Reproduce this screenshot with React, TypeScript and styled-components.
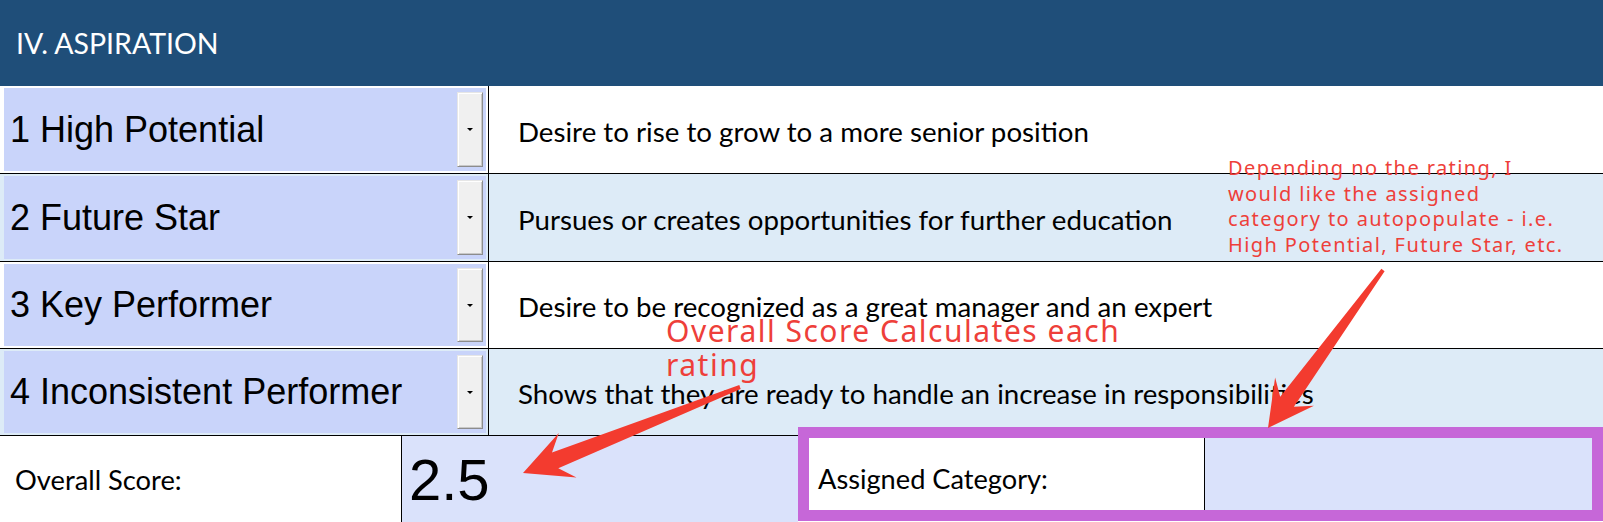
import styled, { createGlobalStyle } from 'styled-components'

const GlobalStyle = createGlobalStyle`
  html, body {
    margin: 0;
    padding: 0;
    background: #ffffff;
  }
`

interface Rating {
  label: string
  desc: string
  height: number
  shaded: boolean
}

const ratings: Rating[] = [
  { label: '1 High Potential', desc: 'Desire to rise to grow to a more senior position', height: 88, shaded: false },
  { label: '2 Future Star', desc: 'Pursues or creates opportunities for further education', height: 88, shaded: true },
  { label: '3 Key Performer', desc: 'Desire to be recognized as a great manager and an expert', height: 87, shaded: false },
  { label: '4 Inconsistent Performer', desc: 'Shows that they are ready to handle an increase in responsibilities', height: 87, shaded: true },
]

// tapered annotation arrow, tail -> tip
const arrowPoints = (tx: number, ty: number, px: number, py: number, headLen: number, headHalf: number) => {
  const dx = px - tx
  const dy = py - ty
  const len = Math.hypot(dx, dy)
  const ux = dx / len
  const uy = dy / len
  const nx = -uy
  const ny = ux
  const at = (along: number, side: number) =>
    `${(tx + ux * along + nx * side).toFixed(1)},${(ty + uy * along + ny * side).toFixed(1)}`
  const neck = len - headLen * 0.72
  const base = len - headLen
  return [
    at(0, 2),
    at(neck, 8.5),
    at(base, headHalf),
    at(len, 0),
    at(base, -headHalf),
    at(neck, -8.5),
    at(0, -2),
  ].join(' ')
}

function App() {
  return (
    <>
      <GlobalStyle />
      <Sheet>
        <Header>
          <Title>IV. ASPIRATION</Title>
        </Header>

        {ratings.map((r) => (
          <RatingRow key={r.label} $h={r.height} $shaded={r.shaded}>
            <ComboCell>
              <Combo>
                <ComboText>{r.label}</ComboText>
                <DropButton>
                  <Caret />
                </DropButton>
              </Combo>
            </ComboCell>
            <DescCell>{r.desc}</DescCell>
          </RatingRow>
        ))}

        <SummaryRow>
          <LabelCell>Overall Score:</LabelCell>
          <ScoreCell>2.5</ScoreCell>
          <Highlight>
            <AssignLabel>Assigned Category:</AssignLabel>
            <AssignValue />
          </Highlight>
        </SummaryRow>

        <Note $x={666} $y={314} $size={30} $lh={34} $ls={1.5}>
          Overall Score Calculates each
          <br />
          rating
        </Note>
        <Note $x={1228} $y={155} $size={20} $lh={25.5} $ls={1.4}>
          Depending no the rating, I
          <br />
          would like the assigned
          <br />
          category to autopopulate - i.e.
          <br />
          High Potential, Future Star, etc.
        </Note>

        <ArrowLayer width="1603" height="522" viewBox="0 0 1603 522">
          <polygon points={arrowPoints(1383, 270, 1268, 428, 45, 24)} fill="#F33B2F" />
          <polygon points={arrowPoints(740, 387, 523, 473, 48, 24)} fill="#F33B2F" />
        </ArrowLayer>
      </Sheet>
    </>
  )
}

export default App

const Sheet = styled.div`
  position: relative;
  width: 1603px;
  height: 522px;
  overflow: hidden;
  display: flex;
  flex-direction: column;
  background: #ffffff;
`

const Header = styled.div`
  height: 86px;
  flex-shrink: 0;
  background-color: #1F4E79;
  display: flex;
  align-items: center;
  padding-left: 16px;
`

const Title = styled.h1`
  margin: 0;
  font-family: Lato, "Open Sans", sans-serif;
  font-size: 28.5px;
  font-weight: 400;
  color: #ffffff;
`

const RatingRow = styled.div<{ $h: number; $shaded: boolean }>`
  height: ${(p) => p.$h}px;
  flex-shrink: 0;
  box-sizing: border-box;
  display: grid;
  grid-template-columns: 489px 1fr;
  border-bottom: 1px solid #000000;
  background-color: ${(p) => (p.$shaded ? '#DDEBF7' : '#ffffff')};
`

const ComboCell = styled.div`
  display: flex;
  padding: 2px 2px 2px 4px;
  border-right: 1px solid #000000;
  min-width: 0;
`

const Combo = styled.div`
  flex: 1;
  display: flex;
  align-items: center;
  background-color: #C9D4FA;
  padding: 4px 3px 4px 6px;
`

const ComboText = styled.span`
  flex: 1;
  font-family: "Liberation Sans", Arial, sans-serif;
  font-size: 36px;
  color: #000000;
  white-space: nowrap;
`

const DropButton = styled.div`
  width: 26px;
  align-self: stretch;
  box-sizing: border-box;
  background-color: #F0F0F0;
  border: 1px solid;
  border-color: #E6E6E6 #8C8C8C #8C8C8C #E6E6E6;
  box-shadow: inset 1px 1px 0 #ffffff, inset -1px -1px 0 #C8C8C8;
  display: flex;
  align-items: center;
  justify-content: center;
`

const Caret = styled.span`
  width: 0;
  height: 0;
  border-left: 3px solid transparent;
  border-right: 3px solid transparent;
  border-top: 3px solid #000000;
`

const DescCell = styled.div`
  display: flex;
  align-items: center;
  padding: 3px 0 0 29px;
  font-family: Lato, "Open Sans", sans-serif;
  font-size: 27.7px;
  color: #000000;
  white-space: nowrap;
`

const SummaryRow = styled.div`
  flex: 1;
  display: flex;
  min-height: 0;
`

const LabelCell = styled.div`
  width: 401px;
  box-sizing: border-box;
  display: flex;
  align-items: center;
  padding-left: 15px;
  font-family: Lato, "Open Sans", sans-serif;
  font-size: 27.3px;
  color: #000000;
  background-color: #ffffff;
`

const ScoreCell = styled.div`
  width: 397px;
  box-sizing: border-box;
  display: flex;
  align-items: center;
  padding-left: 7px;
  border-left: 1px solid #000000;
  background-color: #DAE2FB;
  font-family: "Liberation Sans", Arial, sans-serif;
  font-size: 58px;
  color: #000000;
`

const Highlight = styled.div`
  position: relative;
  flex: 1;
  display: flex;
  margin-top: -9px;
  margin-bottom: 1px;
  border: 11px solid #C667D8;
  box-shadow: inset 0 0 0 1px #EBCBF2;
`

const AssignLabel = styled.div`
  width: 396px;
  box-sizing: border-box;
  display: flex;
  align-items: center;
  padding: 8px 0 0 9px;
  border-right: 1px solid #000000;
  background-color: #ffffff;
  font-family: Lato, "Open Sans", sans-serif;
  font-size: 27.2px;
  color: #000000;
`

const AssignValue = styled.div`
  flex: 1;
  background-color: #DAE2FB;
`

const Note = styled.div<{ $x: number; $y: number; $size: number; $lh: number; $ls: number }>`
  position: absolute;
  left: ${(p) => p.$x}px;
  top: ${(p) => p.$y}px;
  font-family: "Noto Sans", "Open Sans", sans-serif;
  font-size: ${(p) => p.$size}px;
  line-height: ${(p) => p.$lh}px;
  letter-spacing: ${(p) => p.$ls}px;
  color: #EE3F3A;
  white-space: nowrap;
`

const ArrowLayer = styled.svg`
  position: absolute;
  left: 0;
  top: 0;
  pointer-events: none;
`
